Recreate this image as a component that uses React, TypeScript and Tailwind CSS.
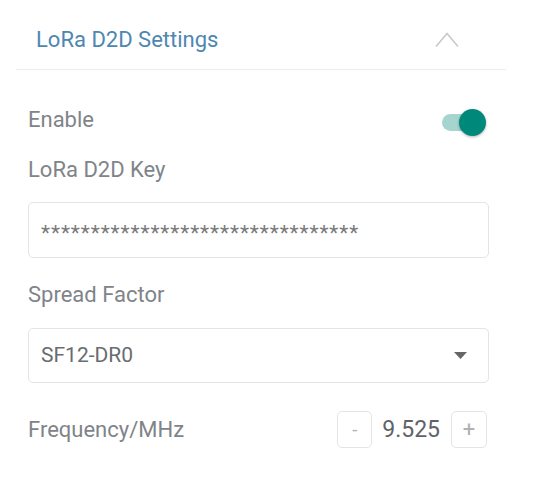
import React from 'react';

export default function App() {
    const labelClass = 'text-[22px] leading-[28px] text-[#7f8489]';

    return (
        <div className="min-h-screen w-[538px] bg-white" style={{ fontFamily: 'Roboto, "Noto Sans", sans-serif' }}>
            <div className="ml-[16px] w-[490px]">
                {/* header */}
                <div className="flex items-center justify-between border-b border-[#ececec] pl-[20px] pr-[47px] pt-[26px] pb-[15px]">
                    <span className="text-[22px] leading-[28px] text-[#4d87b1]">LoRa D2D Settings</span>
                    <svg width="24" height="16" viewBox="0 0 24 16" fill="none">
                        <polyline points="1,14.5 12,1.5 23,14.5" stroke="#c9c9c9" strokeWidth="1.6" />
                    </svg>
                </div>

                <div className="pl-[12px] pr-[17px]">
                    {/* enable */}
                    <div className="mt-[36px] flex h-[28px] items-center justify-between">
                        <span className={labelClass}>Enable</span>
                        <div className="relative mr-[7px] mt-[4px] h-[17px] w-[40px] rounded-full bg-[#a6d5cf]">
                            <div className="absolute right-[-4px] top-[-5px] h-[27px] w-[27px] rounded-full bg-[#00897b] shadow-[0_1px_3px_rgba(0,0,0,0.3)]" />
                        </div>
                    </div>

                    {/* key */}
                    <div className={`mt-[22px] ${labelClass}`}>LoRa D2D Key</div>
                    <div className="mt-[18px] flex h-[56px] items-center rounded-[5px] border border-[#e4e4e4] px-[12px]">
                        <span className="pt-[6px] text-[21px] leading-none tracking-[0.9px] text-[#7a7a7a]">********************************</span>
                    </div>

                    {/* spread factor */}
                    <div className={`mt-[23px] ${labelClass}`}>Spread Factor</div>
                    <div className="mt-[19px] flex h-[55px] items-center justify-between rounded-[5px] border border-[#e4e4e4] pl-[12px] pr-[21px]">
                        <span className="text-[21px] leading-none text-[#696c70]">SF12-DR0</span>
                        <svg width="13" height="7" viewBox="0 0 13 7">
                            <polygon points="0,0 13,0 6.5,7" fill="#666666" />
                        </svg>
                    </div>

                    {/* frequency */}
                    <div className="mt-[28px] flex h-[37px] items-center justify-between">
                        <span className={labelClass}>Frequency/MHz</span>
                        <div className="mr-[2px] flex items-center">
                            <button className="flex h-[37px] w-[35px] items-center justify-center rounded-[5px] border border-[#e4e4e4] text-[18px] text-[#b0b0b0]">-</button>
                            <span className="ml-[10px] mr-[11px] text-[23px] leading-none text-[#5f6368]">9.525</span>
                            <button className="flex h-[37px] w-[36px] items-center justify-center rounded-[5px] border border-[#e4e4e4] text-[22px] text-[#b0b0b0]">+</button>
                        </div>
                    </div>
                </div>
            </div>
        </div>
    );
}
